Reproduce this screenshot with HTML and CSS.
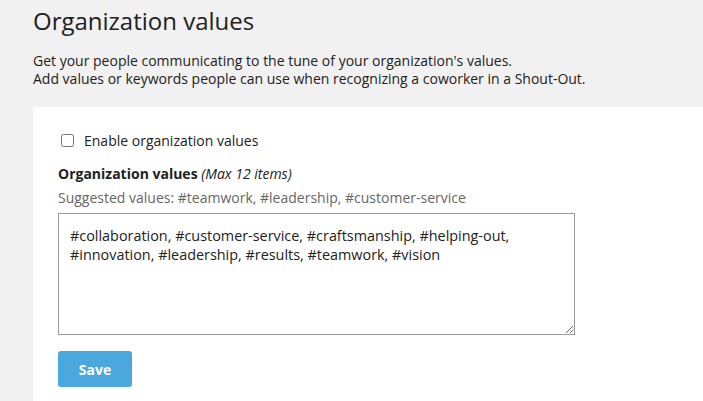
FILE: index.html
```html
<!DOCTYPE html>
<html lang="en">
<head>
    <meta charset="UTF-8">
    <meta name="viewport" content="width=device-width, initial-scale=1.0">
    <title>Organization values</title>
    <link rel="stylesheet" href="styles.css">
</head>
<body>
    <div class="header">
        <h1>Organization values</h1>
        <p>
            Get your people communicating to the tune of your organization's values.<br>
            Add values or keywords people can use when recognizing a coworker in a Shout-Out.
        </p>
    </div>

    <form class="panel">
        <label class="check">
            <input type="checkbox" name="enabled">
            <span>Enable organization values</span>
        </label>

        <div class="field-title">Organization values <em>(Max 12 items)</em></div>
        <div class="hint">Suggested values: #teamwork, #leadership, #customer-service</div>

        <textarea name="values">#collaboration, #customer-service, #craftsmanship, #helping-out, #innovation, #leadership, #results, #teamwork, #vision</textarea>

        <button type="submit" class="save">Save</button>
    </form>
</body>
</html>
```

FILE: styles.css
```css
body {
    font-family: 'Open Sans', sans-serif;
    background-color: #f1f1f1;
    margin: 0;
    padding: 0 0 0 33px;
    color: #222;
}
.header h1 {
    font-size: 24px;
    font-weight: normal;
    margin: 0;
    padding-top: 3px;
    line-height: 36px;
}
.header p {
    font-size: 14px;
    line-height: 18px;
    margin: 13px 0 0;
}
.panel {
    background-color: white;
    margin-top: 19px;
    padding: 24px 25px 20px;
    min-height: 250px;
}
.check {
    display: flex;
    align-items: center;
    font-size: 14px;
    margin-bottom: 14px;
}
.check input {
    margin: 0 10px 0 3px;
    width: 13px;
    height: 13px;
}
.field-title {
    font-size: 14px;
    font-weight: bold;
    line-height: 19px;
}
.field-title em {
    font-weight: normal;
}
.hint {
    color: #666;
    font-size: 14px;
    line-height: 19px;
    margin-top: 5px;
}
textarea {
    display: block;
    box-sizing: border-box;
    width: 517px;
    height: 122px;
    margin-top: 6px;
    padding: 12px 11px 10px;
    border: 1px solid #999;
    font-family: 'Open Sans', sans-serif;
    font-size: 14.4px;
    line-height: 19px;
    color: #222;
    resize: both;
}
.save {
    display: block;
    margin-top: 16px;
    width: 74px;
    height: 36px;
    background-color: #4aa8de;
    color: white;
    border: none;
    border-radius: 3px;
    font-family: 'Open Sans', sans-serif;
    font-weight: bold;
    font-size: 14px;
}
```
